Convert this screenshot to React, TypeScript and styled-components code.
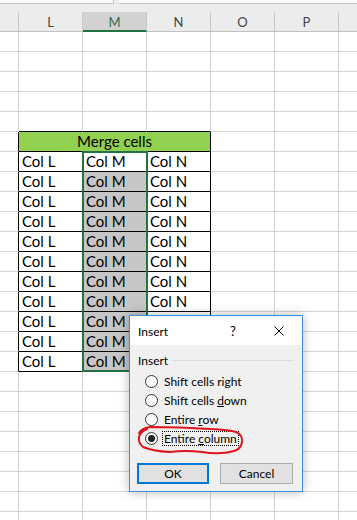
import React from 'react';
import styled, { createGlobalStyle } from 'styled-components';

const Global = createGlobalStyle`
  html, body { margin: 0; padding: 0; background: #fff; }
  body { width: 357px; height: 520px; overflow: hidden; }
`;

const COLS = [19, 64, 64, 64, 64, 64, 40];
const LETTERS = ['', 'L', 'M', 'N', 'O', 'P', ''];
const GRID = '#d4d4d4';
const BLACK = '#000';
const ROWS = 25;

const Page = styled.div`
  position: relative;
  width: 357px;
  height: 520px;
  overflow: hidden;
  background: #fff;
  display: flex;
  flex-direction: column;
`;

const TopStrip = styled.div`
  height: 12px;
  flex-shrink: 0;
  background: #ececec;
  display: flex;
  gap: 5px;
  align-items: flex-start;
`;

const FormulaBox = styled.div<{ $w: number }>`
  width: ${p => p.$w}px;
  flex-shrink: 0;
  height: 3px;
  background: #fafafa;
  border-bottom: 1px solid #c6c6c6;
  border-right: 1px solid #c6c6c6;
`;

const HeaderRow = styled.div`
  display: flex;
  height: 20px;
  flex-shrink: 0;
  background: #ececec;
`;

const HeaderCell = styled.div<{ $w: number; $sel?: boolean }>`
  width: ${p => p.$w}px;
  flex-shrink: 0;
  box-sizing: border-box;
  height: 20px;
  border-right: 1px solid #c8c8c8;
  border-bottom: ${p => (p.$sel ? '2px solid #217346' : '1px solid #c0c0c0')};
  background: ${p => (p.$sel ? '#d2d2d2' : '#ececec')};
  color: ${p => (p.$sel ? '#2f6b48' : '#444')};
  font: 13px 'Lato', sans-serif;
  display: flex;
  align-items: center;
  justify-content: center;
  padding-top: 1px;
`;

const Row = styled.div`
  display: flex;
  height: 20px;
  flex-shrink: 0;
`;

const Cell = styled.div<{ $w: number; $r: string; $b: string; $bg: string; $center?: boolean }>`
  width: ${p => p.$w}px;
  flex-shrink: 0;
  box-sizing: border-box;
  height: 20px;
  border-right: 1px solid ${p => p.$r};
  border-bottom: 1px solid ${p => p.$b};
  background: ${p => p.$bg};
  font: 15px 'Lato', sans-serif;
  color: #000;
  line-height: 19px;
  padding-left: ${p => (p.$center ? 0 : 3)}px;
  text-align: ${p => (p.$center ? 'center' : 'left')};
  white-space: nowrap;
  overflow: hidden;
`;

const Selection = styled.div`
  position: absolute;
  left: 82px;
  top: 151px;
  width: 66px;
  height: 221px;
  box-sizing: border-box;
  border: 2px solid #217346;
  pointer-events: none;
`;

const Dialog = styled.div`
  position: absolute;
  left: 129px;
  top: 315px;
  width: 174px;
  height: 177px;
  box-sizing: border-box;
  border: 1px solid #3d8fd8;
  background: #f0f0f0;
  box-shadow: 0 0 10px rgba(0, 0, 0, 0.28);
  display: flex;
  flex-direction: column;
  font: 12px 'Lato', sans-serif;
  color: #000;
`;

const TitleBar = styled.div`
  height: 29px;
  flex-shrink: 0;
  background: #fff;
  display: flex;
  align-items: center;
  padding-left: 8px;
`;

const Title = styled.span`
  flex: 1;
  font-size: 12px;
  padding-top: 2px;
`;

const Help = styled.span`
  font-size: 13px;
  width: 10px;
  margin-right: 34px;
  padding-top: 1px;
`;

const Close = styled.span`
  width: 10px;
  height: 10px;
  margin-right: 18px;
  display: flex;
`;

const Body = styled.div`
  flex: 1;
  display: flex;
  flex-direction: column;
  padding: 7px 8px 7px 7px;
`;

const GroupHeader = styled.div`
  display: flex;
  align-items: center;
  height: 16px;
  padding-left: 1px;
`;

const GroupLine = styled.div`
  flex: 1;
  height: 1px;
  background: #dcdcdc;
  margin-left: 5px;
`;

const RadioList = styled.div`
  display: flex;
  flex-direction: column;
  margin-top: 4px;
  padding-left: 8px;
`;

const RadioRow = styled.div`
  height: 19px;
  display: flex;
  align-items: center;
`;

const Circle = styled.span<{ $on?: boolean }>`
  width: 13px;
  height: 13px;
  box-sizing: border-box;
  border-radius: 50%;
  border: 1px solid #333;
  background: #fff;
  display: flex;
  align-items: center;
  justify-content: center;
  margin-right: 5px;
  flex-shrink: 0;
  &::after {
    content: '';
    display: ${p => (p.$on ? 'block' : 'none')};
    width: 7px;
    height: 7px;
    border-radius: 50%;
    background: #222;
  }
`;

const RadioLabel = styled.span<{ $focus?: boolean }>`
  padding: 0 1px;
  line-height: 13px;
  outline: ${p => (p.$focus ? '1px dotted #000' : 'none')};
  outline-offset: 0px;
`;

const ButtonRow = styled.div`
  display: flex;
  gap: 11px;
  margin-top: auto;
`;

const Button = styled.div<{ $primary?: boolean }>`
  width: ${p => (p.$primary ? 72 : 73)}px;
  height: 21px;
  box-sizing: border-box;
  background: #e1e1e1;
  border: ${p => (p.$primary ? '2px solid #0078d7' : '1px solid #adadad')};
  display: flex;
  align-items: center;
  justify-content: center;
  font-size: 12px;
`;

const Scribble = styled.svg`
  position: absolute;
  left: 130px;
  top: 420px;
  width: 120px;
  height: 40px;
  pointer-events: none;
  overflow: visible;
`;

function cellProps(r: number, c: number) {
  const inTableRows = r >= 5 && r <= 16;
  let right = GRID;
  let bottom = GRID;
  let bg = '#fff';
  if (c === 0 && inTableRows) right = BLACK;
  if (c >= 1 && c <= 3) {
    if (r >= 4 && r <= 16) bottom = BLACK;
    if (r >= 6 && r <= 16) right = BLACK;
    if (c === 2 && r >= 7 && r <= 16) bg = '#c6c6c6';
  }
  return { right, bottom, bg };
}

const DATA = ['Col L', 'Col M', 'Col N'];

function cellText(r: number, c: number) {
  if (r < 6 || r > 16 || c < 1 || c > 3) return '';
  // Col N is hidden under the dialog from row 14 on
  if (c === 3 && r >= 14) return '';
  return DATA[c - 1];
}

export default function App() {
  const rows = Array.from({ length: ROWS }, (_, r) => r);
  return (
    <Page>
      <Global />
      <TopStrip>
        <FormulaBox $w={113} />
        <FormulaBox $w={239} />
      </TopStrip>
      <HeaderRow>
        {COLS.map((w, c) => (
          <HeaderCell key={c} $w={w} $sel={c === 2}>
            {LETTERS[c]}
          </HeaderCell>
        ))}
      </HeaderRow>
      {rows.map(r => {
        if (r === 5) {
          return (
            <Row key={r}>
              <Cell $w={19} $r={BLACK} $b={GRID} $bg="#fff" />
              <Cell $w={192} $r={BLACK} $b={BLACK} $bg="#92d050" $center>
                Merge cells
              </Cell>
              {COLS.slice(4).map((w, i) => (
                <Cell key={i} $w={w} $r={GRID} $b={GRID} $bg="#fff" />
              ))}
            </Row>
          );
        }
        return (
          <Row key={r}>
            {COLS.map((w, c) => {
              const p = cellProps(r, c);
              return (
                <Cell key={c} $w={w} $r={p.right} $b={p.bottom} $bg={p.bg}>
                  {cellText(r, c)}
                </Cell>
              );
            })}
          </Row>
        );
      })}
      <Selection />
      <Dialog>
        <TitleBar>
          <Title>Insert</Title>
          <Help>?</Help>
          <Close>
            <svg width="10" height="10" viewBox="0 0 10 10">
              <path d="M0.5 0.5 L9.5 9.5 M9.5 0.5 L0.5 9.5" stroke="#000" strokeWidth="1" fill="none" />
            </svg>
          </Close>
        </TitleBar>
        <Body>
          <GroupHeader>
            <span>Insert</span>
            <GroupLine />
          </GroupHeader>
          <RadioList>
            <RadioRow>
              <Circle />
              <RadioLabel>Shift cells ri<u>g</u>ht</RadioLabel>
            </RadioRow>
            <RadioRow>
              <Circle />
              <RadioLabel>Shift cells <u>d</u>own</RadioLabel>
            </RadioRow>
            <RadioRow>
              <Circle />
              <RadioLabel>Entire <u>r</u>ow</RadioLabel>
            </RadioRow>
            <RadioRow>
              <Circle $on />
              <RadioLabel $focus>Entire <u>c</u>olumn</RadioLabel>
            </RadioRow>
          </RadioList>
          <ButtonRow>
            <Button $primary>OK</Button>
            <Button>Cancel</Button>
          </ButtonRow>
        </Body>
      </Dialog>
      <Scribble viewBox="0 0 120 40">
        <path
          d="M9 13 Q12 8 20 7 Q50 7 80 9 Q100 10 106 12 Q113 15 112 22 Q111 29 104 31 Q90 35 72 32 Q55 30 40 32 Q22 31 13 27 Q8 23 9 17 Q10 12 17 9"
          stroke="#e0141e"
          strokeWidth="2"
          fill="none"
          strokeLinecap="round"
        />
      </Scribble>
    </Page>
  );
}
